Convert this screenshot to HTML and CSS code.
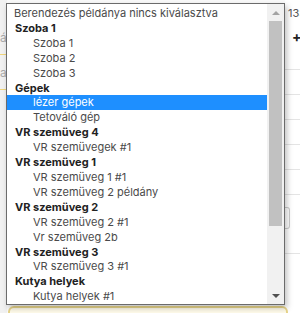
FILE: index.html
```html
<!DOCTYPE html>
<html lang="hu">
<head>
  <meta charset="UTF-8" />
  <title>Berendezés</title>
  <link rel="stylesheet" href="styles.css">
</head>
<body>

  <div class="page">
    <div class="side-left">
      <div class="ghost g1">ás</div>
      <div class="yline"></div>
      <div class="ghost g2">a</div>
      <div class="yline"></div>
    </div>
    <div class="side-right">
      <div class="time">13:</div>
      <div class="plus">+</div>
      <div class="hline"></div>
      <div class="hline"></div>
      <div class="hline"></div>
      <div class="hline"></div>
      <div class="hline"></div>
      <div class="hline"></div>
      <div class="mini-input"></div>
      <div class="hline"></div>
    </div>
    <div class="bottom-box"></div>
  </div>

  <!-- LENYÍLÓ LISTA -->
  <div class="dropdown">
    <div class="list">
      <div class="opt top">Berendezés példánya nincs kiválasztva</div>
      <div class="grp">Szoba 1</div>
      <div class="opt">Szoba 1</div>
      <div class="opt">Szoba 2</div>
      <div class="opt">Szoba 3</div>
      <div class="grp">Gépek</div>
      <div class="opt selected">lézer gépek</div>
      <div class="opt">Tetováló gép</div>
      <div class="grp">VR szemüveg 4</div>
      <div class="opt">VR szemüvegek #1</div>
      <div class="grp">VR szemüveg 1</div>
      <div class="opt">VR szemüveg 1 #1</div>
      <div class="opt">VR szemüveg 2 példány</div>
      <div class="grp">VR szemüveg 2</div>
      <div class="opt">VR szemüveg 2 #1</div>
      <div class="opt">Vr szemüveg 2b</div>
      <div class="grp">VR szemüveg 3</div>
      <div class="opt">VR szemüveg 3 #1</div>
      <div class="grp">Kutya helyek</div>
      <div class="opt">Kutya helyek #1</div>
    </div>
    <div class="scrollbar">
      <div class="arrow up"></div>
      <div class="track">
        <div class="thumb"></div>
      </div>
      <div class="arrow down"></div>
    </div>
  </div>

</body>
</html>
```

FILE: styles.css
```css
body {
  margin: 0;
  font-family: Inter, "Noto Sans", sans-serif;
  background: #fafafa;
  width: 300px;
  height: 313px;
  overflow: hidden;
  position: relative;
}

.page {
  display: flex;
  height: 313px;
  position: relative;
}

.side-left {
  width: 7px;
  padding-top: 30px;
  background: #f1f1f1;
}

.ghost {
  font-size: 12px;
  color: #aaa;
  height: 20px;
}

.yline {
  height: 1px;
  background: #f0d57a;
  margin: 4px 0 10px;
}

.side-right {
  margin-left: auto;
  width: 15px;
  padding-top: 6px;
  background: #fff;
}

.time {
  font-size: 11px;
  color: #555;
  padding-left: 3px;
  white-space: nowrap;
  overflow: hidden;
}

.plus {
  font-size: 14px;
  font-weight: bold;
  color: #222;
  padding: 8px 0 0 7px;
}

.hline {
  height: 1px;
  background: #e4e4e4;
  margin-top: 24px;
}

.mini-input {
  margin-top: 12px;
  height: 20px;
  border: 1px solid #ccc;
  border-left: none;
  border-radius: 0 3px 3px 0;
  width: 4px;
}

.bottom-box {
  position: absolute;
  left: 8px;
  right: 12px;
  top: 306px;
  height: 14px;
  border: 2px solid #e8d58a;
  border-radius: 6px;
  background: #fffbea;
}

.dropdown {
  position: absolute;
  left: 6px;
  top: 3px;
  width: 277px;
  height: 300px;
  display: flex;
  background: white;
  border: 1px solid #6b6b6b;
  box-shadow: 2px 3px 6px rgba(0,0,0,0.25);
}

.list {
  flex: 1;
  padding-top: 2px;
  font-size: 11px;
  line-height: 14.9px;
}

.opt {
  color: #4a4a4a;
  padding-left: 26px;
}

.opt.top {
  padding-left: 7px;
}

.opt.selected {
  background: #1e8fff;
  color: white;
}

.grp {
  font-weight: bold;
  color: #222;
  padding-left: 8px;
}

.scrollbar {
  width: 17px;
  background: #f1f1f1;
  display: flex;
  flex-direction: column;
}

.arrow {
  height: 17px;
  display: flex;
  align-items: center;
  justify-content: center;
}

.arrow.up::before {
  content: "";
  border: 4px solid transparent;
  border-bottom: 4px solid #a3a3a3;
  border-top: none;
}

.arrow.down::before {
  content: "";
  border: 4px solid transparent;
  border-top: 4px solid #505050;
  border-bottom: none;
}

.track {
  flex: 1;
  padding: 0 2px;
}

.thumb {
  height: 205px;
  background: #c1c1c1;
}
```
